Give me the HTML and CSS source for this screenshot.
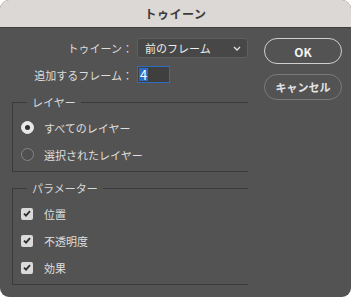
FILE: index.html
```html
<!DOCTYPE html>
<html lang="ja">
<head>
  <meta charset="UTF-8">
  <title>トゥイーン</title>
  <link rel="stylesheet" href="styles.css">
</head>
<body>
  <div class="dialog">
    <div class="titlebar">トゥイーン</div>
    <div class="content">
      <div class="main">
        <div class="field-row">
          <label class="field-label">トゥイーン：</label>
          <div class="select">
            <span>前のフレーム</span>
            <svg class="chevron" width="8" height="5" viewBox="0 0 8 5"><path d="M1 1 L4 4 L7 1" fill="none" stroke="#e0e0e0" stroke-width="1.3"/></svg>
          </div>
        </div>
        <div class="field-row second">
          <label class="field-label">追加するフレーム：</label>
          <div class="number-input"><span class="selected">4</span></div>
        </div>

        <div class="group">
          <span class="group-title">レイヤー</span>
          <div class="option">
            <span class="radio checked"></span>
            <span>すべてのレイヤー</span>
          </div>
          <div class="option">
            <span class="radio"></span>
            <span>選択されたレイヤー</span>
          </div>
        </div>

        <div class="group">
          <span class="group-title">パラメーター</span>
          <div class="option">
            <span class="checkbox"><svg width="8" height="7" viewBox="0 0 8 7"><path d="M1 3.6 L3 5.6 L7 1.2" fill="none" stroke="#2e2e2e" stroke-width="1.8"/></svg></span>
            <span>位置</span>
          </div>
          <div class="option">
            <span class="checkbox"><svg width="8" height="7" viewBox="0 0 8 7"><path d="M1 3.6 L3 5.6 L7 1.2" fill="none" stroke="#2e2e2e" stroke-width="1.8"/></svg></span>
            <span>不透明度</span>
          </div>
          <div class="option">
            <span class="checkbox"><svg width="8" height="7" viewBox="0 0 8 7"><path d="M1 3.6 L3 5.6 L7 1.2" fill="none" stroke="#2e2e2e" stroke-width="1.8"/></svg></span>
            <span>効果</span>
          </div>
        </div>
      </div>

      <div class="buttons">
        <button class="button default">OK</button>
        <button class="button">キャンセル</button>
      </div>
    </div>
  </div>
</body>
</html>
```

FILE: styles.css
```css
body {
  margin: 0;
  padding: 0;
  background-color: #ffffff;
  font-family: 'Noto Sans CJK JP', 'Noto Sans', sans-serif;
  font-size: 11px;
  color: #e2e2e2;
}

.dialog {
  width: 351px;
  height: 297px;
  border-radius: 9px;
  overflow: hidden;
  background-color: #535353;
  display: flex;
  flex-direction: column;
}

.titlebar {
  height: 28px;
  line-height: 28px;
  flex-shrink: 0;
  background-color: #dcd8d6;
  border-bottom: 1px solid #3e3e3e;
  box-sizing: border-box;
  text-align: center;
  font-weight: bold;
  font-size: 12px;
  color: #3b3b3b;
  letter-spacing: 0.5px;
}

.content {
  display: flex;
  flex-shrink: 0;
  align-items: flex-start;
  padding: 10px 9px 0 12px;
}

.main {
  width: 236px;
}

.field-row {
  display: flex;
  align-items: center;
  height: 20px;
}

.field-row.second {
  margin-top: 8px;
  height: 17px;
}

.field-label {
  width: 121px;
  margin-right: 4px;
  text-align: right;
  color: #dcdcdc;
}

.select {
  width: 111px;
  height: 20px;
  box-sizing: border-box;
  border: 1px solid #5f5f5f;
  border-radius: 3px;
  background-color: #474747;
  display: flex;
  align-items: center;
  justify-content: space-between;
  padding: 0 6px 0 7px;
  color: #ececec;
}

.number-input {
  width: 33px;
  height: 17px;
  box-sizing: border-box;
  border: 1px solid #2f6cbf;
  background-color: #3f3f3f;
  padding: 1px;
  display: flex;
}

.selected {
  background-color: #2d6cc4;
  color: #ffffff;
  font-size: 13px;
  line-height: 13px;
  padding: 0 1px;
}

.group {
  position: relative;
  margin-top: 19px;
  padding: 11px 0 3px 8px;
  border: 1px solid #3a3a3a;
  border-right: none;
}

.group + .group {
  margin-top: 16px;
}

.group-title {
  position: absolute;
  top: -8px;
  left: 14px;
  padding: 0 5px;
  line-height: 14px;
  background-color: #535353;
  color: #d8d8d8;
}

.option {
  display: flex;
  align-items: center;
  height: 27px;
  color: #dedede;
}

.radio {
  width: 13px;
  height: 13px;
  box-sizing: border-box;
  border-radius: 50%;
  border: 1px solid #868686;
  background-color: #4f4f4f;
  margin-right: 10px;
  display: flex;
  align-items: center;
  justify-content: center;
}

.radio.checked {
  background-color: #e8e8e8;
  border-color: #e8e8e8;
}

.radio.checked::after {
  content: '';
  width: 5px;
  height: 5px;
  border-radius: 50%;
  background-color: #2e2e2e;
}

.checkbox {
  width: 12px;
  height: 12px;
  border-radius: 2px;
  background-color: #dadada;
  margin-right: 11px;
  display: flex;
  align-items: center;
  justify-content: center;
}

.buttons {
  margin-left: 16px;
  display: flex;
  flex-direction: column;
}

.button {
  width: 78px;
  height: 26px;
  border-radius: 13px;
  background-color: transparent;
  border: 1px solid #7a7a7a;
  color: #e4e4e4;
  font-family: inherit;
  font-size: 11px;
  font-weight: bold;
  padding: 0;
  margin-bottom: 10px;
}

.button.default {
  border: 1.5px solid #cfcfcf;
  color: #f2f2f2;
  font-size: 12px;
}
```
